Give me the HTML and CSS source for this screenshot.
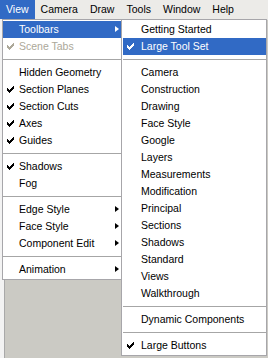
FILE: index.html
```html
<!DOCTYPE html>
<html>
<head>
<meta name="viewport" content="width=device-width, initial-scale=1">
<link rel="stylesheet" href="styles.css">
</head>
<body>
  <ul class="menubar">
    <li class="active">View</li>
    <li>Camera</li>
    <li>Draw</li>
    <li>Tools</li>
    <li>Window</li>
    <li>Help</li>
  </ul>

  <div class="app">
    <div class="side-strip"></div>
    <div class="canvas"></div>
  </div>

  <div class="dropdown">
    <ul class="menu view-menu">
      <li class="item hover">Toolbars<span class="arrow"></span></li>
      <li class="item disabled checked">Scene Tabs</li>
      <li class="sep"></li>
      <li class="item">Hidden Geometry</li>
      <li class="item checked">Section Planes</li>
      <li class="item checked">Section Cuts</li>
      <li class="item checked">Axes</li>
      <li class="item checked">Guides</li>
      <li class="sep"></li>
      <li class="item checked">Shadows</li>
      <li class="item">Fog</li>
      <li class="sep"></li>
      <li class="item">Edge Style<span class="arrow"></span></li>
      <li class="item">Face Style<span class="arrow"></span></li>
      <li class="item">Component Edit<span class="arrow"></span></li>
      <li class="sep"></li>
      <li class="item">Animation<span class="arrow"></span></li>
    </ul>

    <ul class="menu toolbars-menu">
      <li class="item">Getting Started</li>
      <li class="item hover checked">Large Tool Set</li>
      <li class="sep"></li>
      <li class="item">Camera</li>
      <li class="item">Construction</li>
      <li class="item">Drawing</li>
      <li class="item">Face Style</li>
      <li class="item">Google</li>
      <li class="item">Layers</li>
      <li class="item">Measurements</li>
      <li class="item">Modification</li>
      <li class="item">Principal</li>
      <li class="item">Sections</li>
      <li class="item">Shadows</li>
      <li class="item">Standard</li>
      <li class="item">Views</li>
      <li class="item">Walkthrough</li>
      <li class="sep"></li>
      <li class="item">Dynamic Components</li>
      <li class="sep"></li>
      <li class="item checked">Large Buttons</li>
    </ul>
  </div>
</body>
</html>
```

FILE: styles.css
```css
* {
  box-sizing: border-box;
}

body {
  margin: 0;
  width: 268px;
  height: 358px;
  overflow: hidden;
  background-color: #ecebe8;
  font-family: "Liberation Sans", Arial, sans-serif;
  font-size: 10.5px;
  color: #000;
  position: relative;
}

ul {
  list-style-type: none;
  margin: 0;
  padding: 0;
}

.menubar {
  display: flex;
  height: 19px;
  background-color: #ecebe8;
}

.menubar li {
  padding: 0 6px;
  line-height: 19px;
}

.menubar li.active {
  background-color: #316ac5;
  color: #fff;
}

.app {
  display: flex;
  height: 339px;
}

.side-strip {
  width: 5px;
  border-right: 1px solid #a9a9a9;
  background-color: #f3f3f3;
}

.canvas {
  flex: 1;
  background-color: #cbcac4;
  border-top: 1px solid #e6e6e6;
}

/* dropdowns drawn over the window */
.dropdown {
  position: absolute;
  top: 19px;
  left: 2px;
  display: flex;
  align-items: flex-start;
}

.menu {
  background-color: #fff;
  border: 1px solid #a7a6aa;
  padding: 1px 0;
}

.view-menu {
  width: 120px;
}

.toolbars-menu {
  width: 146px;
  margin-left: -1px;
  padding-left: 1px;
}

.item {
  position: relative;
  height: 17px;
  line-height: 17px;
  padding-left: 16px;
  white-space: nowrap;
}

.item.hover {
  background-color: #316ac5;
  color: #fff;
}

.item.disabled {
  color: #aca899;
}

.item.checked::before {
  content: "";
  position: absolute;
  left: 4px;
  top: 5px;
  width: 7px;
  height: 7px;
  background: url("data:image/svg+xml;utf8,<svg xmlns='http://www.w3.org/2000/svg' width='7' height='7'><path d='M0 2h1v1h1v1h1v-1h1v-1h1v-1h1v-1h1v3h-1v1h-1v1h-1v1h-1v1h-1v-1h-1v-1h-1v-1h-1z' fill='black'/></svg>") no-repeat;
}

.item.hover.checked::before {
  background: url("data:image/svg+xml;utf8,<svg xmlns='http://www.w3.org/2000/svg' width='7' height='7'><path d='M0 2h1v1h1v1h1v-1h1v-1h1v-1h1v-1h1v3h-1v1h-1v1h-1v1h-1v1h-1v-1h-1v-1h-1v-1h-1z' fill='white'/></svg>") no-repeat;
}

.item.disabled.checked::before {
  background: url("data:image/svg+xml;utf8,<svg xmlns='http://www.w3.org/2000/svg' width='7' height='7'><path d='M0 2h1v1h1v1h1v-1h1v-1h1v-1h1v-1h1v3h-1v1h-1v1h-1v1h-1v1h-1v-1h-1v-1h-1v-1h-1z' fill='%23aca899'/></svg>") no-repeat;
}

.toolbars-menu .item {
  padding-left: 18px;
}

.arrow {
  position: absolute;
  right: 2px;
  top: 5px;
  width: 0;
  height: 0;
  border-top: 3.5px solid transparent;
  border-bottom: 3.5px solid transparent;
  border-left: 4px solid #000;
}

.item.hover .arrow {
  border-left-color: #fff;
}

.sep {
  height: 9px;
  padding: 4px 0;
}

.sep::after {
  content: "";
  display: block;
  height: 1px;
  background-color: #a6a6a6;
}
```
